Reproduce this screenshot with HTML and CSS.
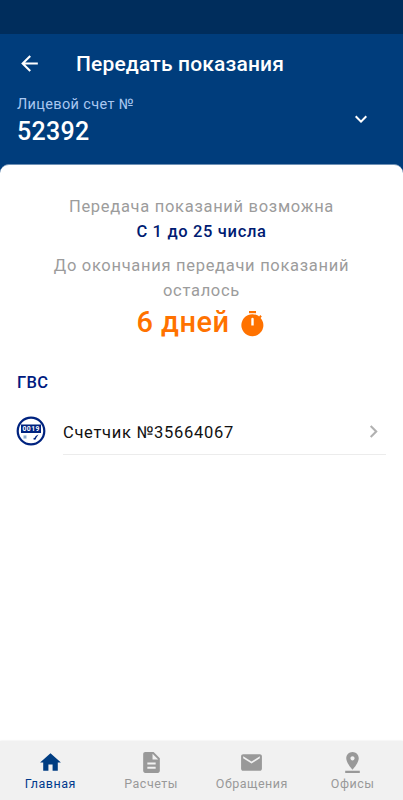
FILE: index.html
```
<!DOCTYPE html>
<html lang="ru">
<head>
<meta charset="utf-8">
<title>Передать показания</title>
<link rel="stylesheet" href="styles.css">
</head>
<body>
<header class="header">
  <div class="status-bar"></div>
  <div class="toolbar">
    <svg class="back" viewBox="0 0 24 24"><path d="M20 11H7.830l5.590-5.590L12 4l-8 8 8 8 1.410-1.410L7.830 13H20z"/></svg>
    <h1 class="title">Передать показания</h1>
  </div>
  <div class="account">
    <div>
      <div class="account-label">Лицевой счет №</div>
      <div class="account-number">52392</div>
    </div>
    <svg class="expand" viewBox="0 0 24 24"><path d="M7.410 8.590 12 13.170l4.590-4.580L18 10l-6 6-6-6z"/></svg>
  </div>
</header>
<main class="sheet">
  <section class="period">
    <p class="hint">Передача показаний возможна</p>
    <p class="dates">С 1 до 25 числа</p>
    <p class="hint remaining">До окончания передачи показаний<br>осталось</p>
    <div class="days"><span>6 дней</span>
      <svg class="timer" viewBox="0 0 24 28"><path d="M8 1h7v2.200H8z"/><path fill-rule="evenodd" d="M11.500 4.200c2.500 0 4.700.8 6.600 2.200l1.200-1.300 1.500 1.500-1.200 1.300A11 11 0 1 1 11.500 4.200zM10.300 9a1.200 1.200 0 0 1 2.400 0v6.500h-2.400z"/></svg>
    </div>
  </section>
  <h2 class="group">ГВС</h2>
  <div class="meter">
    <svg class="meter-icon" viewBox="0 0 30 30">
      <circle cx="15" cy="15" r="13.300"/>
      <rect x="5" y="8.500" width="20" height="8.500"/>
      <text x="15.200" y="15.300">0019</text>
      <path class="snow" d="M9 19v4M7.300 20l3.400 2M10.700 20l-3.400 2"/>
      <path class="needle" d="m22.500 18.400-2.800 1.600-.9 1.700-1.300.3.200 1.700 1.900-.2.700-1.700z"/>
    </svg>
    <div class="meter-row">
      <span>Счетчик №35664067</span>
      <svg class="chevron" viewBox="0 0 24 24"><path d="M8.590 16.590 13.170 12 8.590 7.410 10 6l6 6-6 6z"/></svg>
    </div>
  </div>
</main>
<nav class="tabs">
  <a class="tab active"><svg viewBox="0 0 24 24"><path d="M10 20v-6h4v6h5v-8h3L12 3 2 12h3v8z"/></svg><span>Главная</span></a>
  <a class="tab"><svg viewBox="0 0 24 24"><path d="M14 2H6c-1.100 0-1.990.9-1.990 2L4 20c0 1.100.89 2 1.990 2H18c1.100 0 2-.9 2-2V8zm2 16H8v-2h8zm0-4H8v-2h8zm-3-5V3.500L18.500 9z"/></svg><span>Расчеты</span></a>
  <a class="tab"><svg viewBox="0 0 24 24"><path d="M20 4H4c-1.100 0-1.990.9-1.990 2L2 18c0 1.100.9 2 2 2h16c1.100 0 2-.9 2-2V6c0-1.100-.9-2-2-2m0 4-8 5-8-5V6l8 5 8-5z"/></svg><span>Обращения</span></a>
  <a class="tab"><svg viewBox="0 0 24 24"><path d="M18 8c0-3.310-2.690-6-6-6S6 4.690 6 8c0 4.500 6 11 6 11s6-6.500 6-11m-8 0c0-1.100.9-2 2-2s2 .9 2 2-.89 2-2 2-2-.9-2-2M5 20v2h14v-2z"/></svg><span>Офисы</span></a>
</nav>
</body>
</html>
```
FILE: styles.css
```
* { box-sizing: border-box; }
body {
  margin: 0;
  height: 800px;
  display: flex;
  flex-direction: column;
  overflow: hidden;
  background: #003d7c;
  font-family: Roboto, sans-serif;
}
h1, h2, p { margin: 0; }
svg { display: block; fill: currentColor; flex: none; }

.header { height: 164px; color: #fff; }
.status-bar { height: 33.500px; background: #002d5c; }
.toolbar {
  height: 59px;
  padding-left: 17px;
  display: flex;
  align-items: center;
}
.back { width: 25px; height: 25px; }
.title {
  margin: 1px 0 0 34px;
  font-size: 21px;
  font-weight: 500;
  letter-spacing: 0.160px;
}
.account {
  display: flex;
  justify-content: space-between;
  padding: 3px 30px 0 17px;
}
.account-label {
  font-size: 14.500px;
  line-height: 18px;
  letter-spacing: 0.350px;
  color: #a9c7f0;
}
.account-number {
  font-size: 25px;
  line-height: 36px;
  font-weight: 500;
  letter-spacing: 0.300px;
}
.expand { width: 24px; height: 24px; margin-top: 11px; }

.sheet {
  flex: 1;
  background: #fff;
  border-radius: 9px 9px 0 0;
  border-top: 1px solid #6f91b5;
}
.period { padding-top: 29px; text-align: center; }
.hint {
  font-size: 16.500px;
  line-height: 25px;
  letter-spacing: 0.700px;
  color: #9c9c9c;
}
.dates {
  font-size: 16.500px;
  line-height: 25px;
  font-weight: 500;
  letter-spacing: 0.660px;
  color: #001b72;
}
.remaining { margin-top: 9px; }
.days {
  display: flex;
  justify-content: center;
  margin-top: -1px;
  padding-right: 2px;
  color: #ff7200;
  font-size: 29px;
  line-height: 40px;
  font-weight: 500;
  letter-spacing: 0.500px;
}
.timer { width: 24px; height: 28px; margin: 8px 0 0 11px; }
.group {
  margin: 31px 0 0 17px;
  font-size: 16.500px;
  line-height: 20px;
  font-weight: 500;
  letter-spacing: 0.300px;
  color: #001b80;
}
.meter { display: flex; padding: 16px 17px 0 16px; }
.meter-icon { width: 30px; height: 30px; margin-top: 7px; }
.meter-icon circle { fill: #fff; stroke: #00237f; stroke-width: 2.200px; }
.meter-icon rect { fill: #00237f; }
.meter-icon text {
  fill: #fff;
  font-size: 6.800px;
  font-weight: 700;
  text-anchor: middle;
  letter-spacing: 0.500px;
}
.snow { stroke: #7fa3c9; stroke-width: 1px; }
.needle { fill: #00237f; }
.meter-row {
  flex: 1;
  height: 46px;
  margin-left: 17px;
  padding-top: 2px;
  display: flex;
  justify-content: space-between;
  align-items: center;
  border-bottom: 1px solid #ececec;
  font-size: 16.500px;
  letter-spacing: 0.700px;
  color: #111;
}
.chevron { width: 25px; height: 25px; margin-top: -2px; color: #b1b1b1; }

.tabs {
  height: 59.500px;
  display: flex;
  background: #f1f1f1;
  box-shadow: 0 0 2px #e6e6e6;
}
.tab {
  flex: 1;
  display: flex;
  flex-direction: column;
  align-items: center;
  padding-top: 9px;
  font-size: 12.500px;
  line-height: 18px;
  letter-spacing: 0.500px;
  color: #999;
}
.tab svg { width: 25px; height: 25px; }
.active { color: #003d82; }
.active span { color: #003a8c; }
```
